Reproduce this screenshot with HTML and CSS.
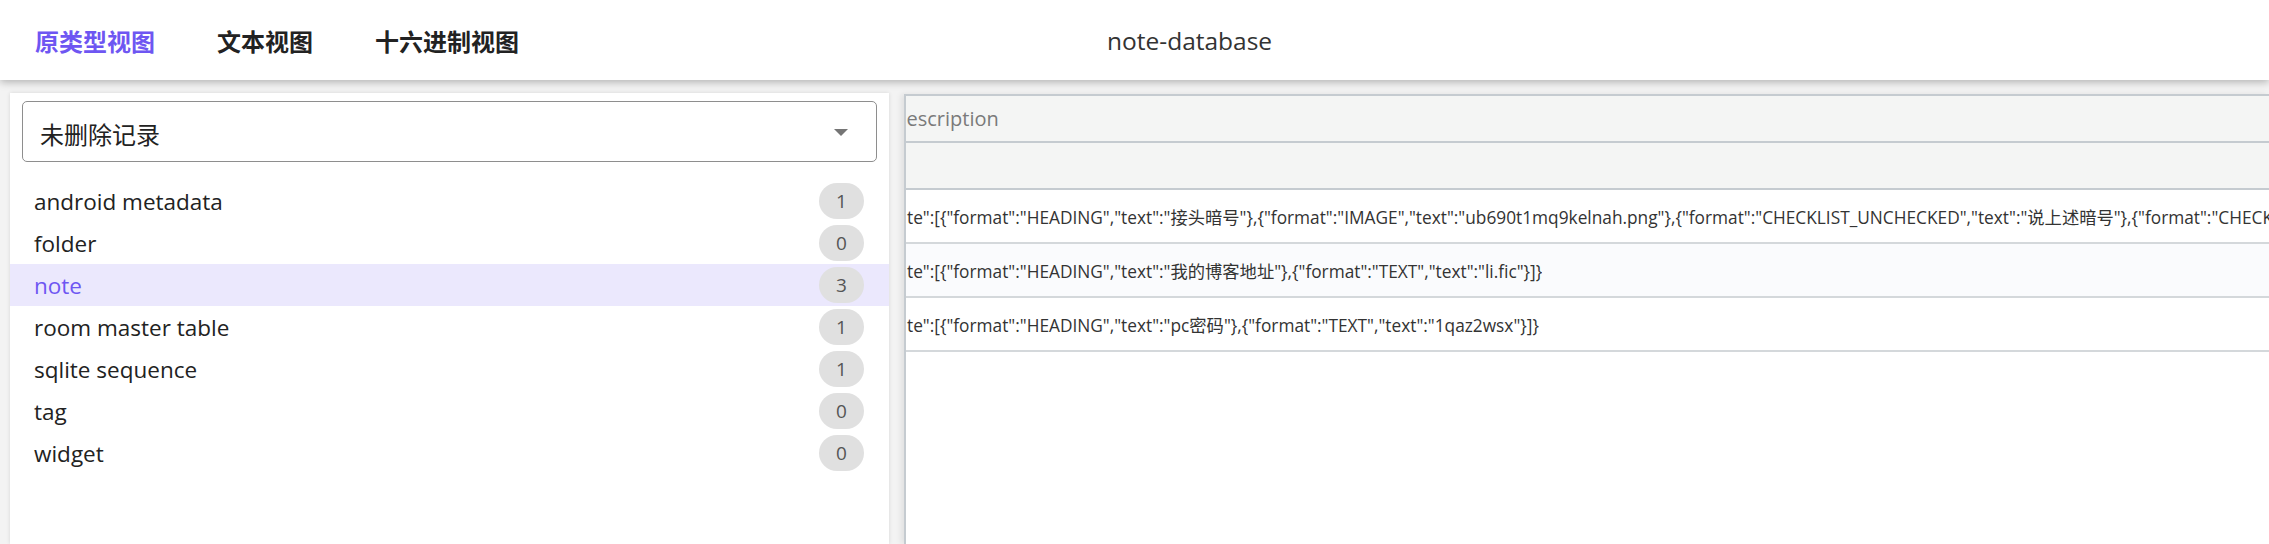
FILE: index.html
```html
<!DOCTYPE html>
<html lang="zh-CN">
<head>
  <meta charset="UTF-8">
  <meta name="viewport" content="width=device-width, initial-scale=1.0">
  <title>note-database</title>
  <link rel="stylesheet" href="styles.css">
</head>
<body>
  <header class="topbar">
    <nav class="tabs">
      <span class="tab active">原类型视图</span>
      <span class="tab">文本视图</span>
      <span class="tab">十六进制视图</span>
    </nav>
    <div class="db-name">note-database</div>
  </header>

  <main class="workspace">
    <aside class="sidebar">
      <div class="select">
        <span class="select-value">未删除记录</span>
        <svg class="select-arrow" width="14" height="8" viewBox="0 0 14 8"><path d="M0 0h14L7 7z" fill="#757575"/></svg>
      </div>
      <ul class="table-list">
        <li><span>android metadata</span><span class="count">1</span></li>
        <li><span>folder</span><span class="count">0</span></li>
        <li class="selected"><span>note</span><span class="count">3</span></li>
        <li><span>room master table</span><span class="count">1</span></li>
        <li><span>sqlite sequence</span><span class="count">1</span></li>
        <li><span>tag</span><span class="count">0</span></li>
        <li><span>widget</span><span class="count">0</span></li>
      </ul>
    </aside>

    <section class="grid">
      <div class="row head"><div class="cell"><span class="scrolled">Description</span></div></div>
      <div class="row filter"><div class="cell"></div></div>
      <div class="row"><div class="cell">te":[{"format":"HEADING","text":"接头暗号"},{"format":"IMAGE","text":"ub690t1mq9kelnah.png"},{"format":"CHECKLIST_UNCHECKED","text":"说上述暗号"},{"format":"CHECKLIST_CHECKED","text":"对上暗号"}]}</div></div>
      <div class="row alt"><div class="cell">te":[{"format":"HEADING","text":"我的博客地址"},{"format":"TEXT","text":"li.fic"}]}</div></div>
      <div class="row"><div class="cell">te":[{"format":"HEADING","text":"pc密码"},{"format":"TEXT","text":"1qaz2wsx"}]}</div></div>
    </section>
  </main>
</body>
</html>
```

FILE: styles.css
```css
body {
  margin: 0;
  height: 544px;
  overflow: hidden;
  background-color: #f3f3f3;
  font-family: "Open Sans", "Noto Sans CJK SC", sans-serif;
  color: #333;
}

.topbar {
  position: relative;
  z-index: 2;
  height: 80px;
  display: flex;
  align-items: center;
  background-color: #fff;
  box-shadow: 0 2px 8px rgba(0, 0, 0, 0.28);
}

.tabs {
  display: flex;
  gap: 62px;
  padding-left: 35px;
  width: 1072px;
}

.tab {
  font-size: 24px;
  font-weight: bold;
  color: #222;
}

.tab.active {
  color: #6e56f2;
}

.db-name {
  font-size: 24.5px;
  color: #333;
}

.workspace {
  display: flex;
  gap: 15px;
  padding-top: 13px;
  height: 451px;
}

.sidebar {
  width: 879px;
  margin-left: 10px;
  background-color: #fff;
  box-shadow: 0 0 4px rgba(0, 0, 0, 0.12);
  padding-top: 8px;
}

.select {
  height: 56px;
  margin: 0 12px;
  border: 1.5px solid #8e8e8e;
  border-radius: 5px;
  display: flex;
  align-items: center;
  justify-content: space-between;
  padding: 3px 28px 0 17px;
}

.select-value {
  font-size: 24px;
  color: #222;
}

.table-list {
  list-style: none;
  margin: 18px 0 0;
  padding: 0;
}

.table-list li {
  height: 42px;
  display: flex;
  align-items: center;
  justify-content: space-between;
  padding: 0 25px 0 24px;
  font-size: 22.5px;
  color: #222;
}

.table-list li.selected {
  background-color: #ebe8fd;
  color: #6e56f2;
}

.count {
  width: 45px;
  height: 36px;
  border-radius: 18px;
  background-color: #e0e0e0;
  color: #555;
  font-size: 19px;
  display: flex;
  align-items: center;
  justify-content: center;
}

.grid {
  flex: 1;
  margin-top: 1px;
  background-color: #fff;
  border-left: 2px solid #c5cbd0;
  border-top: 2px solid #c5cbd0;
  box-shadow: -3px 0 6px rgba(0, 0, 0, 0.08);
  overflow: hidden;
}

.row {
  height: 52px;
  border-bottom: 2px solid #d4d8db;
  display: flex;
  align-items: center;
  background-color: #fff;
}

.row.head {
  height: 45px;
  background-color: #f4f5f4;
  border-bottom-color: #c5cbd0;
}

.row.filter {
  height: 45px;
  background-color: #f4f5f4;
  border-bottom-color: #c5cbd0;
}

.row.alt {
  background-color: #fafbfd;
}

.cell {
  white-space: nowrap;
  overflow: hidden;
  font-size: 17.3px;
  color: #333;
  padding-left: 1px;
}

.row.head .cell {
  font-size: 20px;
  color: #7a7a7a;
}

.scrolled {
  display: inline-block;
  margin-left: -15px;
}
```
